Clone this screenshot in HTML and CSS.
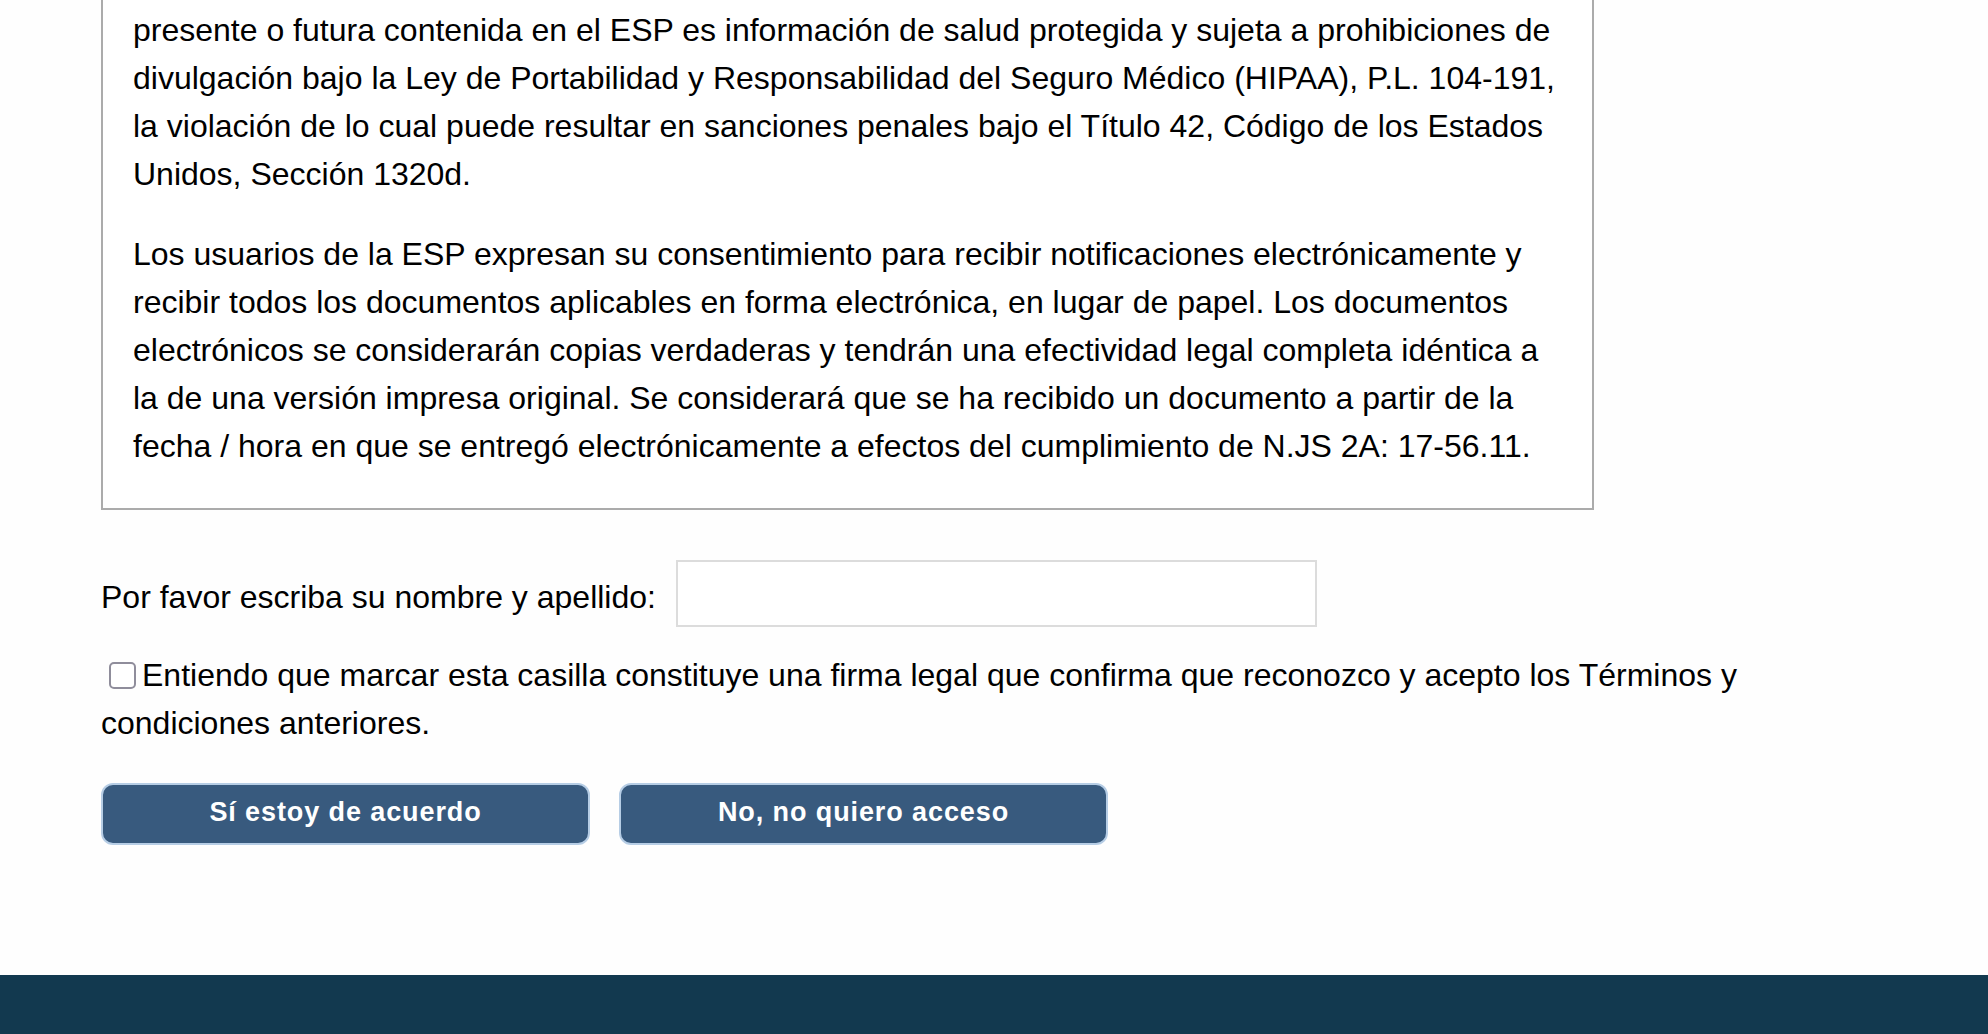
FILE: index.html
```html
<!DOCTYPE html>
<html lang="es">
<head>
<meta charset="utf-8">
<title>Términos y condiciones</title>
<link rel="stylesheet" href="styles.css">
</head>
<body>
<main class="page">
  <section class="terms">
    <p>Usted reconoce que toda la información de salud individualmente identificable, pasada,<br>presente o futura contenida en el ESP es información de salud protegida y sujeta a prohibiciones de divulgación bajo la Ley de Portabilidad y Responsabilidad del Seguro Médico (HIPAA), P.L. 104-191, la violación de lo cual puede resultar en sanciones penales bajo el Título 42, Código de los Estados Unidos, Sección 1320d.</p>
    <p>Los usuarios de la ESP expresan su consentimiento para recibir notificaciones electrónicamente y recibir todos los documentos aplicables en forma electrónica, en lugar de papel. Los documentos electrónicos se considerarán copias verdaderas y tendrán una efectividad legal completa idéntica a la de una versión impresa original. Se considerará que se ha recibido un documento a partir de la fecha / hora en que se entregó electrónicamente a efectos del cumplimiento de N.JS 2A: 17-56.11.</p>
  </section>

  <form class="sign">
    <div class="name-row">
      <label class="name-label" for="fullname">Por favor escriba su nombre y apellido:</label>
      <input class="name-input" id="fullname" type="text">
    </div>
    <div class="agree">
      <input class="agree-box" type="checkbox" id="agree"><label for="agree">Entiendo que marcar esta casilla constituye una firma legal que confirma que reconozco y acepto los Términos y condiciones anteriores.</label>
    </div>
    <div class="actions">
      <button type="button" class="btn">Sí estoy de acuerdo</button>
      <button type="button" class="btn">No, no quiero acceso</button>
    </div>
  </form>
</main>
<footer class="footer"></footer>
</body>
</html>
```

FILE: styles.css
```css
html, body {
  margin: 0;
  padding: 0;
  background: #fefefe;
}

body {
  font-family: "Liberation Sans", Arial, Helvetica, sans-serif;
  font-size: 32px;
  line-height: 48px;
  color: #000;
}

.page {
  padding: 0 101px 130px 101px;
}

.terms {
  width: 1430px;
  margin-top: -76px;
  padding: 32px 29px 38px 30px;
  border: 2px solid #ababab;
  background: #fff;
}

.terms p {
  margin: 0 0 32px 0;
}

.terms p:last-child {
  margin-bottom: 0;
}

.sign {
  margin: 0;
}

.name-row {
  display: flex;
  align-items: center;
  margin-top: 50px;
}

.name-label {
  padding-top: 6px;
}

.name-input {
  box-sizing: border-box;
  width: 641px;
  height: 67px;
  margin-left: 20px;
  border: 2px solid #dcdcdc;
  background: #fff;
  font: inherit;
  padding: 0 12px;
  outline: none;
}

.agree {
  margin-top: 24px;
}

.agree-box {
  appearance: none;
  -webkit-appearance: none;
  box-sizing: border-box;
  width: 27px;
  height: 27px;
  margin: 0 6px 0 8px;
  border: 2px solid #8f8d9b;
  border-radius: 5px;
  background: #fff;
  vertical-align: -3px;
}

.actions {
  display: flex;
  gap: 29px;
  margin-top: 36px;
}

.btn {
  box-sizing: border-box;
  width: 489px;
  height: 62px;
  border: 2px solid #b6cde5;
  border-radius: 12px;
  background: #385a7e;
  color: #fff;
  font-family: "Liberation Sans", Arial, Helvetica, sans-serif;
  font-weight: bold;
  font-size: 27px;
  letter-spacing: 0.9px;
  padding: 0 0 3px 0;
  cursor: pointer;
}

.footer {
  height: 62px;
  background: #12394f;
}
```
